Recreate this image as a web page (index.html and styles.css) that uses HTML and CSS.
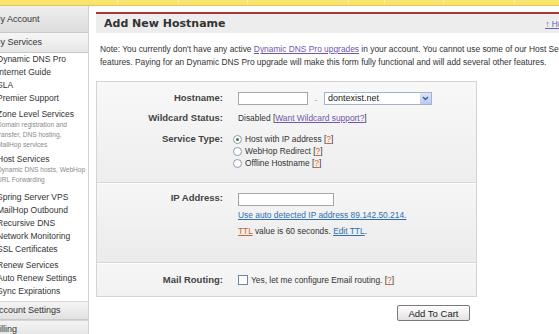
FILE: index.html
```html
<!DOCTYPE html>
<html lang="en">
  <head>
    <meta charset="UTF-8" />
    <title>Add New Hostname</title>
    <link rel="stylesheet" href="styles.css">
  </head>
  <body>
    <div class="topbar">
      <span style="width:117px"></span>
      <span style="width:60px"></span>
      <span style="width:68px"></span>
      <span style="width:100px"></span>
      <span style="width:35px"></span>
      <span style="width:58px"></span>
      <span style="width:70px"></span>
    </div>

    <div class="layout">
      <aside class="sidebar">
        <div class="side-head">My Account</div>
        <div class="side-head light">My Services</div>
        <ul class="side-list">
          <li>Dynamic DNS Pro</li>
          <li>Internet Guide</li>
          <li>SLA</li>
          <li>Premier Support</li>
        </ul>
        <ul class="side-list">
          <li>Zone Level Services
            <small>Domain registration and<br>transfer, DNS hosting,<br>MailHop services</small>
          </li>
        </ul>
        <ul class="side-list spaced">
          <li>Host Services
            <small>Dynamic DNS hosts, WebHop<br>URL Forwarding</small>
          </li>
        </ul>
        <ul class="side-list">
          <li>Spring Server VPS</li>
          <li>MailHop Outbound</li>
          <li>Recursive DNS</li>
          <li>Network Monitoring</li>
          <li>SSL Certificates</li>
        </ul>
        <ul class="side-list">
          <li>Renew Services</li>
          <li>Auto Renew Settings</li>
          <li>Sync Expirations</li>
        </ul>
        <div class="side-head foot">Account Settings</div>
        <div class="side-head foot">Billing</div>
      </aside>

      <main class="content">
        <div class="title-bar">
          <h1>Add New Hostname</h1>
          <a href="#" class="top-link">&uarr; Home</a>
        </div>

        <p class="note">
          Note: You currently don't have any active <a href="#" class="visited">Dynamic DNS Pro upgrades</a> in your account. You cannot use some of our Host Services
          features. Paying for an Dynamic DNS Pro upgrade will make this form fully functional and will add several other features.
        </p>

        <div class="form-box">
          <div class="section first">
            <div class="row hostname">
              <div class="label">Hostname:</div>
              <div class="value inline">
                <span class="input short"></span>
                <span class="dot">.</span>
                <div class="select">
                  <span>dontexist.net</span>
                  <span class="select-btn">
                    <svg width="7" height="5" viewBox="0 0 7 5"><path d="M1 1 L3.5 3.5 L6 1" fill="none" stroke="#3a5a9a" stroke-width="1.4"/></svg>
                  </span>
                </div>
              </div>
            </div>
            <div class="row wildcard">
              <div class="label">Wildcard Status:</div>
              <div class="value">Disabled [<a href="#" class="visited">Want Wildcard support?</a>]</div>
            </div>
            <div class="row service">
              <div class="label">Service Type:</div>
              <div class="value options">
                <label><span class="radio checked"></span><span>Host with IP address <span class="help">[<a href="#">?</a>]</span></span></label>
                <label><span class="radio"></span><span>WebHop Redirect <span class="help">[<a href="#">?</a>]</span></span></label>
                <label><span class="radio"></span><span>Offline Hostname <span class="help">[<a href="#">?</a>]</span></span></label>
              </div>
            </div>
          </div>

          <div class="section second">
            <div class="row">
              <div class="label">IP Address:</div>
              <div class="value">
                <span class="input ip"></span>
                <a href="#" class="blue auto-ip">Use auto detected IP address 89.142.50.214.</a>
                <div class="ttl"><a href="#" class="orange">TTL</a> value is 60 seconds. <a href="#" class="blue">Edit TTL</a>.</div>
              </div>
            </div>
          </div>

          <div class="section third">
            <div class="row">
              <div class="label">Mail Routing:</div>
              <div class="value">
                <label><span class="checkbox"></span><span>Yes, let me configure Email routing. <span class="help">[<a href="#">?</a>]</span></span></label>
              </div>
            </div>
          </div>
        </div>

        <div class="actions">
          <button>Add To Cart</button>
        </div>
      </main>
    </div>
  </body>
</html>
```

FILE: styles.css
```css
body {
  margin: 0;
  font-family: "Liberation Sans", Arial, sans-serif;
  font-size: 8.4px;
  color: #333;
  background-color: #ffffff;
  overflow: hidden;
}
a {
  color: #2d6eb4;
}
.topbar {
  display: flex;
  height: 5px;
  background-color: #f8e46e;
  border-bottom: 1px solid #e0c650;
}
.topbar span {
  border-right: 1px solid #fbee9e;
}
.layout {
  display: flex;
  align-items: flex-start;
}

/* sidebar */
.sidebar {
  flex: none;
  width: 96px;
  margin-left: -8px;
  min-height: 330px;
  border-right: 1px solid #d2d2d2;
  overflow: hidden;
}
.side-head {
  height: 26px;
  line-height: 27px;
  padding-left: 1px;
  font-size: 9px;
  color: #333;
  background: linear-gradient(#efefef, #dcdcdc);
  border-bottom: 1px solid #c9c9c9;
}
.side-head.light {
  height: 19px;
  line-height: 19px;
  background: linear-gradient(#f6f6f6, #e6e6e6);
}
.side-head.foot {
  height: 17px;
  line-height: 17px;
  background: linear-gradient(#f4f4f4, #e2e2e2);
  border-top: 1px solid #d6d6d6;
}
.side-list {
  list-style-type: none;
  margin: 0 0 3px;
  padding: 0 0 0 5px;
}
.side-list.spaced {
  margin-bottom: 6px;
}
.side-list li {
  line-height: 13px;
  font-size: 8.5px;
  color: #333;
  white-space: nowrap;
}
.side-list small {
  display: block;
  margin-top: -1px;
  font-size: 6.6px;
  line-height: 10px;
  color: #8a8a8a;
}

/* main */
.content {
  flex: none;
  width: 496px;
  margin-left: 7px;
  padding-top: 6px;
}
.title-bar {
  display: flex;
  justify-content: space-between;
  align-items: center;
  height: 19px;
  border-top: 2px solid #a8393a;
  background-color: #ededed;
}
.title-bar h1 {
  margin: 0;
  padding-left: 8px;
  font-family: "DejaVu Sans", Verdana, sans-serif;
  font-size: 11px;
  color: #333;
}
.top-link {
  padding-right: 18px;
  color: #6a5fb0;
}
.note {
  margin: 10px 0 0;
  padding-left: 4px;
  line-height: 13px;
}
.visited {
  color: #7156ad;
}
.blue {
  color: #2d6eb4;
}
.orange {
  color: #d0622a;
}
.help a {
  color: #d0622a;
}

/* form */
.form-box {
  width: 379px;
  margin-top: 12px;
  border: 1px solid #d4d4d4;
}
.section {
  padding: 9px 0 13px;
  background: linear-gradient(#f8f8f8, #eeeeee);
  border-bottom: 1px solid #d8d8d8;
}
.section.second {
  padding: 8px 0 25px;
  border-top: 1px solid #ffffff;
  background: linear-gradient(#f6f6f6, #ebebeb);
}
.section.third {
  padding: 10px 0 10px;
  border-top: 1px solid #ffffff;
  border-bottom: none;
  background: linear-gradient(#f6f6f6, #f1f1f1);
}
.row {
  display: grid;
  grid-template-columns: 126px 1fr;
  column-gap: 15px;
  line-height: 12px;
}
.row + .row {
  margin-top: 7px;
}
.row.service {
  margin-top: 9px;
}
.label {
  text-align: right;
  font-weight: bold;
  font-size: 9.5px;
  color: #444;
}
.hostname .label {
  line-height: 14px;
}
.value.inline {
  display: flex;
  align-items: center;
}
.input {
  display: block;
  height: 11px;
  background-color: #ffffff;
  border: 1px solid #a7a7a7;
}
.input.short {
  width: 68px;
}
.input.ip {
  width: 94px;
  margin-top: 1px;
}
.dot {
  width: 16px;
  text-align: center;
  color: #666;
}
.select {
  display: flex;
  justify-content: space-between;
  align-items: center;
  width: 103px;
  height: 11px;
  padding-left: 3px;
  background-color: #ffffff;
  border: 1px solid #a5b3c8;
  font-size: 9px;
  color: #222;
}
.select-btn {
  display: flex;
  align-items: center;
  justify-content: center;
  width: 11px;
  height: 11px;
  background: linear-gradient(#dce6f8, #b9cbef);
}
.options label {
  display: flex;
  align-items: center;
  margin-left: -5px;
}
.radio {
  position: relative;
  width: 7px;
  height: 7px;
  margin-right: 3px;
  border: 1px solid #8a9bb0;
  border-radius: 50%;
  background-color: #ffffff;
}
.radio.checked::after {
  content: "";
  position: absolute;
  left: 2px;
  top: 2px;
  width: 3px;
  height: 3px;
  border-radius: 50%;
  background-color: #2f7a3a;
}
.auto-ip {
  display: block;
  margin-top: 3px;
}
.ttl {
  margin-top: 4px;
}
.third label {
  display: flex;
  align-items: center;
}
.checkbox {
  width: 8px;
  height: 8px;
  margin-right: 3px;
  border: 1px solid #6d84a6;
  background-color: #ffffff;
}
.actions {
  width: 381px;
  display: flex;
  justify-content: flex-end;
  margin-top: 8px;
}
button {
  width: 73px;
  height: 16px;
  margin-right: 7px;
  padding: 0;
  font-family: "Liberation Sans", Arial, sans-serif;
  font-size: 9.5px;
  color: #222;
  background: linear-gradient(#ffffff, #e2e2e2);
  border: 1px solid #7a7a7a;
  border-radius: 2px;
}
```
